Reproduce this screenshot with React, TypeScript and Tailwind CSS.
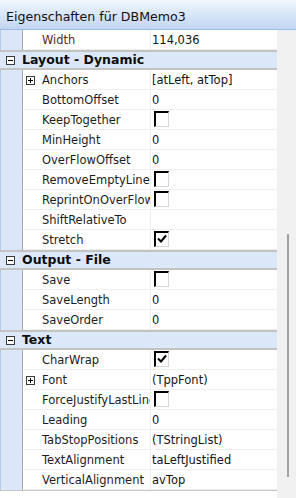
import React from 'react';

type Row =
    | { kind: 'cat'; label: string }
    | { kind: 'prop'; name: string; value?: string; check?: boolean | 'off'; expand?: boolean; nameColor?: string };

const rows: Row[] = [
    { kind: 'prop', name: 'Width', value: '114,036', nameColor: 'text-[#5a2d14]' },
    { kind: 'cat', label: 'Layout - Dynamic' },
    { kind: 'prop', name: 'Anchors', value: '[atLeft, atTop]', expand: true },
    { kind: 'prop', name: 'BottomOffset', value: '0' },
    { kind: 'prop', name: 'KeepTogether', check: 'off' },
    { kind: 'prop', name: 'MinHeight', value: '0' },
    { kind: 'prop', name: 'OverFlowOffset', value: '0' },
    { kind: 'prop', name: 'RemoveEmptyLine', check: 'off' },
    { kind: 'prop', name: 'ReprintOnOverFlow', check: 'off' },
    { kind: 'prop', name: 'ShiftRelativeTo' },
    { kind: 'prop', name: 'Stretch', check: true },
    { kind: 'cat', label: 'Output - File' },
    { kind: 'prop', name: 'Save', check: 'off' },
    { kind: 'prop', name: 'SaveLength', value: '0' },
    { kind: 'prop', name: 'SaveOrder', value: '0' },
    { kind: 'cat', label: 'Text' },
    { kind: 'prop', name: 'CharWrap', check: true },
    { kind: 'prop', name: 'Font', value: '(TppFont)', expand: true },
    { kind: 'prop', name: 'ForceJustifyLastLine', check: 'off' },
    { kind: 'prop', name: 'Leading', value: '0' },
    { kind: 'prop', name: 'TabStopPositions', value: '(TStringList)' },
    { kind: 'prop', name: 'TextAlignment', value: 'taLeftJustified' },
    { kind: 'prop', name: 'VerticalAlignment', value: 'avTop' },
];

function ToggleBox({ plus }: { plus?: boolean }) {
    return (
        <svg width="9" height="9" viewBox="0 0 9 9" className="shrink-0">
            <rect x="0.5" y="0.5" width="8" height="8" fill="#ffffff" stroke="#3c3c3c" />
            <path d="M2 4.5h5" stroke="#000000" strokeWidth="1" />
            {plus && <path d="M4.5 2v5" stroke="#000000" strokeWidth="1" />}
        </svg>
    );
}

function CheckBox({ checked }: { checked: boolean }) {
    return (
        <div className="w-[15px] h-[16px] border-t-2 border-l-2 border-t-black border-l-black border-r border-b border-r-[#d6d6d6] border-b-[#d6d6d6]">
            {checked && (
                <svg width="12" height="13" viewBox="0 0 12 13">
                    <path d="M2 5.5l3 3 5-6" fill="none" stroke="#000000" strokeWidth="2" />
                </svg>
            )}
        </div>
    );
}

function Gutter() {
    return (
        <>
            <div className="w-[22px] shrink-0 bg-[#dbe7f8] border-l border-[#b6c9e3]" />
            <div className="w-px shrink-0 bg-[#a9a9a9]" />
        </>
    );
}

export default function App() {
    return (
        <div className="w-[296px] h-[498px] bg-white flex flex-col overflow-hidden font-['DejaVu_Sans',sans-serif] text-[11.5px] text-[#1c1c1c]">
            {/* Title bar */}
            <div className="h-[30px] shrink-0 border-b border-[#9dbae2] bg-gradient-to-b from-[#f1f6fd] via-[#d8e6f8] to-[#c2d6f1] pl-[6px] pt-[9px] text-[12.6px] leading-[15px] text-[#111111]">
                Eigenschaften für DBMemo3
            </div>

            <div className="flex flex-1 min-h-0">
                {/* Property grid */}
                <div className="w-[277px] shrink-0 flex flex-col">
                    {rows.map((r, i) =>
                        r.kind === 'cat' ? (
                            <div
                                key={i}
                                className="h-[20px] flex items-center gap-[7px] pl-[6px] pt-[1px] bg-[#dce8fa] border-y-2 border-[#c3c3c3] font-bold text-[12.5px] text-[#0c0c0c]"
                            >
                                <ToggleBox />
                                <span>{r.label}</span>
                            </div>
                        ) : (
                            <div key={i} className="h-[20px] flex">
                                <Gutter />
                                <div className="flex flex-1 border-b border-[#efefef]">
                                    <div className="w-[128px] shrink-0 flex items-center gap-[7px] pl-[3px] pt-[2px] overflow-hidden whitespace-nowrap border-r border-[#ebebeb]">
                                        {r.expand ? <ToggleBox plus /> : <div className="w-[9px] shrink-0" />}
                                        <span className={r.nameColor ?? ''}>{r.name}</span>
                                    </div>
                                    {r.check !== undefined ? (
                                        <div className="flex-1 pl-[3px] pt-[1px]">
                                            <CheckBox checked={r.check === true} />
                                        </div>
                                    ) : (
                                        <div className="flex-1 flex items-center pl-[1px] pt-[2px] whitespace-nowrap text-[#141414]">
                                            {r.value}
                                        </div>
                                    )}
                                </div>
                            </div>
                        ),
                    )}
                    <div className="border-t border-[#c6c6c6]" />
                </div>

                {/* Scrollbar */}
                <div className="flex-1 bg-[#f0f0f0] pt-[204px] pl-[10px]">
                    <div className="w-[2px] h-[243px] bg-[#a2a2a2]" />
                </div>
            </div>
        </div>
    );
}
